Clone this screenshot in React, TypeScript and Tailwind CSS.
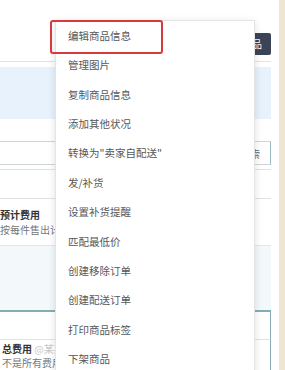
const menuItems = [
	'编辑商品信息',
	'管理图片',
	'复制商品信息',
	'添加其他状况',
	'转换为"卖家自配送"',
	'发/补货',
	'设置补货提醒',
	'匹配最低价',
	'创建移除订单',
	'创建配送订单',
	'打印商品标签',
	'下架商品',
];

const App = () => {
	return (
		<div className="relative h-[370px] w-[285px] overflow-hidden bg-white font-['Noto_Sans_CJK_SC','Noto_Sans',sans-serif]">
			{/* page underneath */}
			<div className="flex h-full w-full">
				<div className="flex w-[271px] flex-col">
					<div className="flex h-[63px] justify-end border-b border-[#e3e3e3] pt-[33px]">
						<button type="button" className="h-[22px] rounded-[2px] bg-[#3b4356] pr-[9px] pl-[8px] text-[10px] leading-[22px] text-white">
							添加商品
						</button>
					</div>
					<div className="mt-[5px] h-[53px] bg-[#e7f2fc]" />
					<div className="mt-[22px] flex h-[25px] items-center justify-end border border-l-0 border-[#9bbcc4] border-t-[#cfd6d8] border-b-[#cfd6d8] pr-[10px] text-[10px] text-[#4b6b74]">
						搜索
					</div>
					<div className="mt-[4px] h-[30px] border-y border-[#e2e2e2]" />
					<div className="flex h-[48px] flex-col justify-center text-[10px] leading-[15px]">
						<p className="font-bold text-[#333]">预计费用</p>
						<p className="text-[#777]">按每件售出计算</p>
					</div>
					<div className="h-[66px] border-t border-[#e6e6e6] bg-[#f3f8fb]" />
					<div className="h-[31px] border-t-2 border-r border-[#86adb4] border-b border-b-[#e2e2e2]" />
					<div className="flex flex-col border-r border-[#86adb4] pl-[2px] text-[10px] leading-[14px]">
						<p className="pt-[2px] font-bold text-[#333]">
							总费用 <span className="font-normal text-[#c8c8c8]">@某某某</span>
						</p>
						<p className="text-[#777]">不是所有费用</p>
					</div>
				</div>
				<div className="w-[8px]" />
				<div className="flex-1 bg-[#f0e5d4]" />
			</div>

			{/* dropdown menu */}
			<ul className="absolute top-[20px] left-[55px] w-[200px] border border-[#e4e4e4] bg-white shadow-[0_2px_8px_rgba(0,0,0,0.12)]">
				{menuItems.map(item => (
					<li key={item} className="flex h-[29.4px] items-center pl-[12px] text-[10.5px] text-[#575757]">
						{item}
					</li>
				))}
			</ul>

			{/* highlight box */}
			<div className="absolute top-[20px] left-[50px] h-[34px] w-[113px] rounded-[3px] border-2 border-[#d8393b]" />
		</div>
	);
};

export default App;
